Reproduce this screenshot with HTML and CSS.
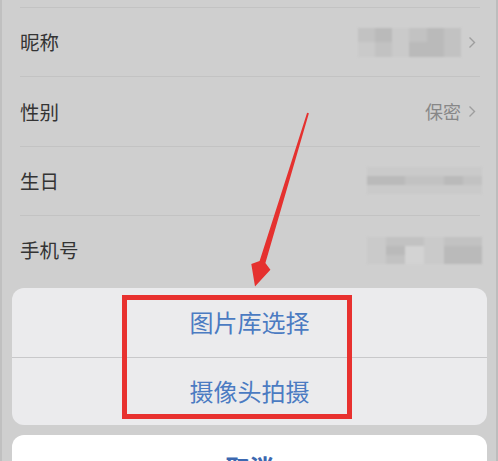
FILE: index.html
```html
<!DOCTYPE html>
<html lang="zh-CN">
<head>
<meta charset="utf-8">
<link rel="stylesheet" href="styles.css">
</head>
<body>
<div class="screen">
  <div class="list">
    <div class="row">
      <span class="label">昵称</span>
      <div class="value">
        <div class="mosaic mosaic-nick">
          <i class="c2"></i><i class="c3"></i><i class="c1"></i><i class="c2"></i><i class="c3"></i><i class="c2"></i>
          <i class="c1"></i><i class="c2"></i><i class="c1"></i><i class="c3"></i><i class="c3"></i><i class="c2"></i>
        </div>
        <svg class="chev" width="8" height="13" viewBox="0 0 8 13"><polyline points="1.5,1.5 6.5,6.5 1.5,11.5" fill="none" stroke="#9e9e9e" stroke-width="1.4"/></svg>
      </div>
    </div>
    <div class="row">
      <span class="label">性别</span>
      <div class="value">
        <span class="muted">保密</span>
        <svg class="chev" width="8" height="13" viewBox="0 0 8 13"><polyline points="1.5,1.5 6.5,6.5 1.5,11.5" fill="none" stroke="#9e9e9e" stroke-width="1.4"/></svg>
      </div>
    </div>
    <div class="row">
      <span class="label">生日</span>
      <div class="value">
        <div class="mosaic mosaic-wide">
          <i class="c1"></i><i class="c1"></i><i class="c1"></i><i class="c1"></i><i class="c1"></i><i class="c1"></i>
          <i class="c3"></i><i class="c3"></i><i class="c2"></i><i class="c2"></i><i class="c3"></i><i class="c2"></i>
          <i class="c1"></i><i class="c1"></i><i class="c1"></i><i class="c1"></i><i class="c1"></i><i class="c1"></i>
        </div>
      </div>
    </div>
    <div class="row">
      <span class="label">手机号</span>
      <div class="value">
        <div class="mosaic mosaic-wide">
          <i class="c1"></i><i class="c2"></i><i class="c2"></i><i class="c1"></i><i class="c2"></i><i class="c2"></i>
          <i class="c1"></i><i class="c3"></i><i class="c0"></i><i class="c1"></i><i class="c3"></i><i class="c3"></i>
          <i class="c1"></i><i class="c2"></i><i class="c0"></i><i class="c1"></i><i class="c3"></i><i class="c3"></i>
        </div>
      </div>
    </div>
  </div>

  <div class="sheet">
    <div class="sheet-group">
      <div class="sheet-btn">图片库选择</div>
      <div class="sheet-btn">摄像头拍摄</div>
    </div>
    <div class="sheet-cancel">取消</div>
  </div>

  <div class="highlight"></div>

  <svg class="arrow" width="498" height="461" viewBox="0 0 498 461">
    <polygon fill="#e5312f" points="308.9,113.3 307.1,112.7 259.6,261.1 251.3,264 255,286.5 270.4,269.8 265.4,262.9"/>
  </svg>

  <div class="edge edge-left"></div>
  <div class="edge edge-right"></div>
</div>
</body>
</html>
```

FILE: styles.css
```css
* { box-sizing: border-box; }
html, body {
  margin: 0;
  padding: 0;
  background: #cfcfcf;
}
body {
  font-family: "Noto Sans CJK SC", "Noto Sans", sans-serif;
}
.screen {
  position: relative;
  width: 498px;
  height: 461px;
  overflow: hidden;
  background: #cfcfcf;
  border-left: 2px solid #c0c0c0;
  border-right: 2px solid #bdbdbd;
}
.list {
  padding-top: 7px;
}
.row {
  display: flex;
  align-items: center;
  height: 69.3px;
  margin-left: 18px;
  margin-right: 16px;
  border-top: 1px solid #c3c3c3;
}
.label {
  font-size: 19.5px;
  color: #343434;
  line-height: 1;
}
.value {
  margin-left: auto;
  display: flex;
  align-items: center;
  gap: 7px;
}
.muted {
  font-size: 18px;
  color: #878787;
  line-height: 1;
}
.chev {
  display: block;
  margin-right: 4px;
}
.mosaic {
  display: grid;
  filter: blur(1.2px);
}
.mosaic i { display: block; }
.mosaic-nick {
  width: 103px;
  height: 29px;
  grid-template-columns: repeat(6, 1fr);
  grid-template-rows: repeat(2, 1fr);
}
.mosaic-wide {
  width: 115px;
  height: 27px;
  grid-template-columns: repeat(6, 1fr);
  grid-template-rows: repeat(3, 1fr);
  margin-right: -2px;
}
.c0 { background: #d3d3d3; }
.c1 { background: #cacaca; }
.c2 { background: #c2c2c2; }
.c3 { background: #bababa; }

.sheet {
  position: absolute;
  left: 10px;
  right: 9px;
  top: 288px;
  display: flex;
  flex-direction: column;
  gap: 10px;
}
.sheet-group {
  background: #ebebed;
  border-radius: 12px;
  overflow: hidden;
}
.sheet-btn {
  height: 68.5px;
  display: flex;
  align-items: center;
  justify-content: center;
  font-size: 24px;
  color: #4b7bc2;
  line-height: 1;
}
.sheet-btn + .sheet-btn {
  border-top: 1px solid #c8c8ca;
}
.sheet-cancel {
  background: #ffffff;
  border-radius: 12px;
  height: 64px;
  padding-top: 20px;
  text-align: center;
  font-size: 24px;
  font-weight: 700;
  color: #3c68b0;
  line-height: 24px;
}
.highlight {
  position: absolute;
  left: 120px;
  top: 295px;
  width: 230px;
  height: 124px;
  border: 5px solid #e8312f;
}
.arrow {
  position: absolute;
  left: -2px;
  top: 0;
}
.edge {
  position: absolute;
  width: 2px;
  background: #3f9ad8;
}
.edge-left {
  left: -2px;
  top: 402px;
  bottom: 0;
}
.edge-right {
  right: -2px;
  top: 380px;
  bottom: 0;
}
```
